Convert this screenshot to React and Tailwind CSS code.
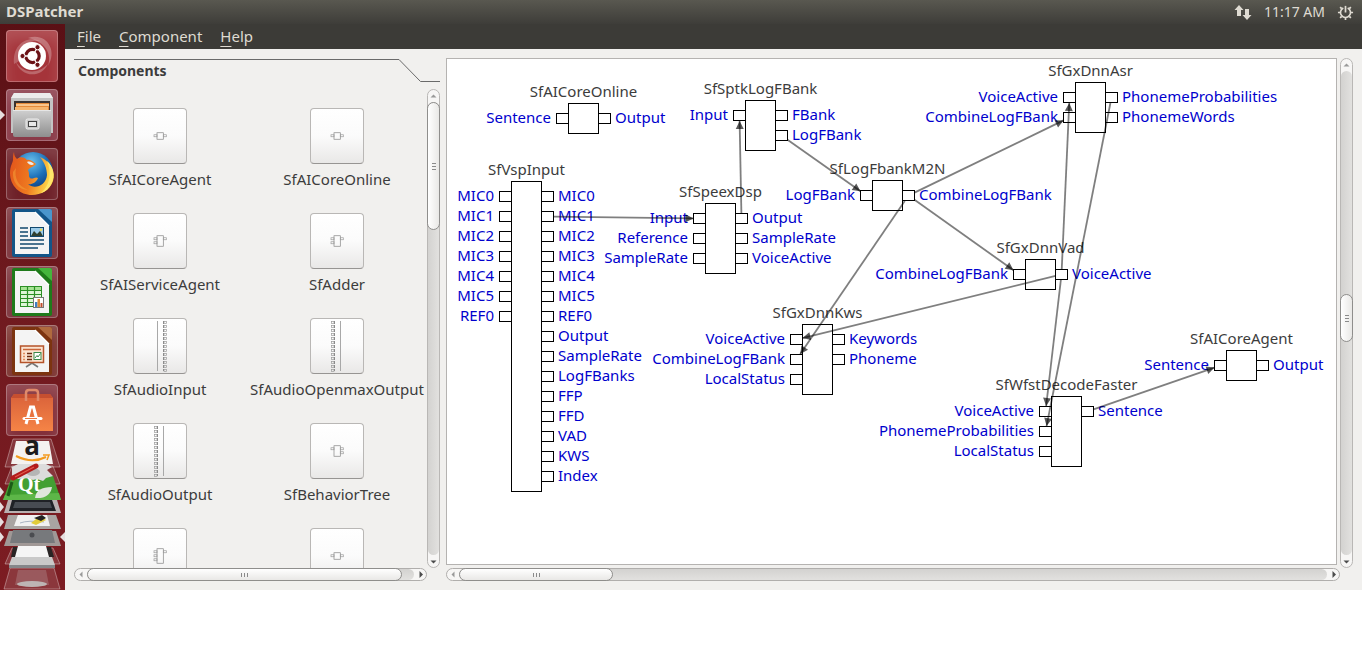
const BLACK_HALF = "rgba(0,0,0,0.5)";

const components = [
  { name: "SfAICoreAgent", ins: 1, outs: 1 },
  { name: "SfAICoreOnline", ins: 1, outs: 1 },
  { name: "SfAIServiceAgent", ins: 2, outs: 1 },
  { name: "SfAdder", ins: 2, outs: 1 },
  { name: "SfAudioInput", ins: 0, outs: 16 },
  { name: "SfAudioOpenmaxOutput", ins: 16, outs: 0 },
  { name: "SfAudioOutput", ins: 16, outs: 0 },
  { name: "SfBehaviorTree", ins: 1, outs: 2 },
  { ins: 3, outs: 1 },
  { ins: 1, outs: 1 },
];

const mics = ["MIC0", "MIC1", "MIC2", "MIC3", "MIC4", "MIC5", "REF0"];

// x, y: top-left corner of the node body on the canvas
const nodes = {
  online: { title: "SfAICoreOnline", x: 121, y: 44, ins: ["Sentence"], outs: ["Output"] },
  vsp: {
    title: "SfVspInput", x: 64, y: 122, ins: mics,
    outs: [...mics, "Output", "SampleRate", "LogFBanks", "FFP", "FFD", "VAD", "KWS", "Index"],
  },
  sptk: { title: "SfSptkLogFBank", x: 298, y: 41, ins: ["Input"], outs: ["FBank", "LogFBank"] },
  speex: {
    title: "SfSpeexDsp", x: 258, y: 144,
    ins: ["Input", "Reference", "SampleRate"], outs: ["Output", "SampleRate", "VoiceActive"],
  },
  m2n: { title: "SfLogFbankM2N", x: 425, y: 121, ins: ["LogFBank"], outs: ["CombineLogFBank"] },
  asr: {
    title: "SfGxDnnAsr", x: 628, y: 23,
    ins: ["VoiceActive", "CombineLogFBank"], outs: ["PhonemeProbabilities", "PhonemeWords"],
  },
  vad: { title: "SfGxDnnVad", x: 578, y: 200, ins: ["CombineLogFBank"], outs: ["VoiceActive"] },
  kws: {
    title: "SfGxDnnKws", x: 355, y: 265,
    ins: ["VoiceActive", "CombineLogFBank", "LocalStatus"], outs: ["Keywords", "Phoneme"],
  },
  wfst: {
    title: "SfWfstDecodeFaster", x: 604, y: 337,
    ins: ["VoiceActive", "PhonemeProbabilities", "LocalStatus"], outs: ["Sentence"],
  },
  agent: { title: "SfAICoreAgent", x: 779, y: 291, ins: ["Sentence"], outs: ["Output"] },
};

// [from node, output index, to node, input index]
const wires = [
  ["vsp", 1, "speex", 0],
  ["speex", 0, "sptk", 0],
  ["sptk", 1, "m2n", 0],
  ["m2n", 0, "asr", 1],
  ["m2n", 0, "vad", 0],
  ["m2n", 0, "kws", 1],
  ["vad", 0, "asr", 0],
  ["vad", 0, "kws", 0],
  ["vad", 0, "wfst", 0],
  ["asr", 0, "wfst", 1],
  ["wfst", 0, "agent", 0],
];

function clip(from, to) {
  const dx = to[0] - from[0];
  const dy = to[1] - from[1];
  const t = Math.min(6 / Math.abs(dx || 0.01), 5.5 / Math.abs(dy || 0.01));
  return [from[0] + dx * t, from[1] + dy * t];
}

function Wire({ wire }) {
  const [a, i, b, j] = wire;
  const from = [nodes[a].x + 36.5, nodes[a].y + 15.5 + i * 20];
  const to = [nodes[b].x - 5.5, nodes[b].y + 15.5 + j * 20];
  const s = clip(from, to);
  const e = clip(to, from);
  const len = Math.hypot(e[0] - s[0], e[1] - s[1]);
  const ux = (e[0] - s[0]) / len;
  const uy = (e[1] - s[1]) / len;
  const bx = e[0] - ux * 8;
  const by = e[1] - uy * 8;
  return (
    <g>
      <line x1={s[0]} y1={s[1]} x2={e[0]} y2={e[1]} stroke={BLACK_HALF} strokeWidth="1.8" />
      <polygon
        points={`${e[0]},${e[1]} ${bx - uy * 4},${by + ux * 4} ${bx + uy * 4},${by - ux * 4}`}
        fill="rgba(0,0,0,0.65)"
      />
    </g>
  );
}

function Port() {
  return <span className="mt-[5px] h-[11px] w-[13px] shrink-0 border border-black bg-white" />;
}

function Node({ node }) {
  const n = Math.max(node.ins.length, node.outs.length);
  return (
    <div className="absolute w-[31px] leading-[18px]" style={{ left: node.x, top: node.y - 21 }}>
      <div className="flex h-[21px] justify-center text-[#3c3c3c]">
        <span className="whitespace-nowrap">{node.title}</span>
      </div>
      <div className="relative border border-black bg-white" style={{ height: n * 20 + 11 }}>
        <ul className="absolute top-[4px] right-full flex flex-col items-end text-[#0000cd]">
          {node.ins.map((p) => (
            <li key={p} className="flex h-5 items-start gap-[5px] whitespace-nowrap">
              {p}
              <Port />
            </li>
          ))}
        </ul>
        <ul className="absolute top-[4px] left-full flex flex-col text-[#0000cd]">
          {node.outs.map((p) => (
            <li key={p} className="flex h-5 items-start gap-[4px] whitespace-nowrap">
              <Port />
              {p}
            </li>
          ))}
        </ul>
      </div>
    </div>
  );
}

function Thumb({ ins, outs }) {
  const n = Math.max(ins, outs);
  const big = n > 8;
  const h = 4 * n + 2.5;
  const top = 28 - h / 2;
  const rows = (count, start) => Array.from({ length: count }, (_, i) => start + i * 4);
  return (
    <svg viewBox="1 1 52 54" className="h-full w-full" fill="none" stroke="#9c9c9c" strokeWidth="0.7">
      {big ? (
        <g>
          <path d={ins ? "M30.500 3V53" : "M24.500 3V53"} stroke="#a8a8a8" strokeWidth="1" />
          <path d={ins ? "M24.500 3V53" : "M30.500 3V53"} stroke="#858585" strokeWidth="1" strokeDasharray="3 1" />
          {rows(13, 3.5).map((y) => (
            <rect key={y} x={ins ? 21.5 : 31} y={y} width="2.5" height="2" />
          ))}
        </g>
      ) : (
        <g>
          <rect x="24" y={top} width="6.300" height={h} stroke="#858585" />
          {rows(ins, top + 2).map((y) => (
            <rect key={y} x="21" y={y} width="3" height="2" />
          ))}
          {rows(outs, top + 2).map((y) => (
            <rect key={y} x="30.300" y={y} width="3" height="2" />
          ))}
        </g>
      )}
    </svg>
  );
}

const ARROWS = {
  up: "M2.5 6.5L5.5 3.5L8.5 6.5Z",
  down: "M2.5 4.5L5.5 7.5L8.5 4.5Z",
  left: "M6.5 2.5L3.5 5.5L6.5 8.5Z",
  right: "M4.5 2L8 5.5L4.5 9Z",
};

function ArrowButton({ dir, dim }) {
  return (
    <button type="button" aria-label={`Scroll ${dir}`} className="flex size-[12px] shrink-0 items-center justify-center">
      <svg viewBox="0 0 11 11" className="size-[11px] shrink-0">
        <path d={ARROWS[dir]} fill={dim ? "#9a9a9a" : "#4c4c4c"} />
      </svg>
    </button>
  );
}

function VScroll({ before, size, topDim }) {
  return (
    <div className="flex w-[13px] shrink-0 flex-col items-center rounded-full border border-[#b9b7b5] bg-[#f7f6f5]">
      <ArrowButton dir="up" dim={topDim} />
      <div className="flex w-full grow flex-col rounded-full bg-linear-to-r from-[#d3d2d0] to-[#e2e1df]">
        <div className={before} />
        <div className={`-mx-px flex flex-col items-center justify-center gap-[2px] rounded-full border border-[#8f8e8c] bg-linear-to-r from-white to-[#e9e8e6] ${size}`}>
          <i className="h-px w-[4px] bg-[#8a8a8a]" />
          <i className="h-px w-[4px] bg-[#8a8a8a]" />
          <i className="h-px w-[4px] bg-[#8a8a8a]" />
        </div>
      </div>
      <ArrowButton dir="down" />
    </div>
  );
}

function HScroll({ size }) {
  return (
    <div className="flex h-[13px] shrink-0 items-center rounded-full border border-[#b0aeac] bg-[#f7f6f5]">
      <ArrowButton dir="left" dim />
      <div className="flex h-full grow rounded-full bg-linear-to-b from-[#d3d2d0] to-[#e2e1df]">
        <div className={`-my-px flex items-center justify-center gap-[2px] rounded-full border border-[#8f8e8c] bg-linear-to-b from-white to-[#e9e8e6] ${size}`}>
          <i className="h-[4px] w-px bg-[#8a8a8a]" />
          <i className="h-[4px] w-px bg-[#8a8a8a]" />
          <i className="h-[4px] w-px bg-[#8a8a8a]" />
        </div>
      </div>
      <ArrowButton dir="right" />
    </div>
  );
}

function UbuntuIcon() {
  return (
    <svg viewBox="0 0 52 52" className="size-full">
      <path d="M8 34C6 14 22 4 36 12C28 8 14 14 15 30" fill="rgba(255,255,255,.22)" />
      <path d="M22 8C40 2 52 20 42 36C46 24 40 12 22 8" fill="rgba(255,255,255,.28)" />
      <path d="M42 34C34 50 14 46 10 32C16 42 30 46 42 34" fill="rgba(255,255,255,.25)" />
      <circle cx="26" cy="26" r="14" fill="#fff" />
      <circle cx="26.500" cy="26" r="6.700" fill="none" stroke="#6b1216" strokeWidth="3.200" />
      <path d="M26.500 26L32.500 36.400M26.500 26L32.500 15.600M26.500 26H16" stroke="#fff" strokeWidth="1.300" />
      <g fill="#6b1216" stroke="#fff" strokeWidth="1">
        <circle cx="16.500" cy="26" r="2.600" />
        <circle cx="31.500" cy="17.200" r="2.600" />
        <circle cx="31.500" cy="34.800" r="2.600" />
      </g>
    </svg>
  );
}

function FilesIcon() {
  return (
    <svg viewBox="0 0 52 52" className="size-full">
      <defs>
        <linearGradient id="cab" x2="0" y2="1">
          <stop offset="0" stopColor="#d0d0d0" />
          <stop offset="1" stopColor="#8e8e8e" />
        </linearGradient>
      </defs>
      <path d="M5 9L8 4H44L47 9V44H5Z" fill="#c4c4c4" />
      <path d="M5 9L8 4H44L47 9Z" fill="#ececec" />
      <rect x="8" y="12" width="36" height="12" fill="#3a3230" />
      <rect x="10" y="14" width="33" height="10" fill="#e58a3a" />
      <path d="M10 16H43" stroke="#ffd9a8" strokeWidth="1.500" />
      <rect x="9" y="18" width="33" height="6" fill="#f6b56e" />
      <path d="M7 21H45V46Q45 48 43 48H9Q7 48 7 46Z" fill="url(#cab)" />
      <path d="M7 21.500H45" stroke="#e6e6e6" />
      <rect x="20" y="30" width="13" height="10" rx="1.500" fill="#c9c9c9" stroke="#efefef" />
      <rect x="22.500" y="32.500" width="8" height="5" fill="#e9e9e9" stroke="#444" />
    </svg>
  );
}

function FirefoxIcon() {
  return (
    <svg viewBox="0 0 52 52" className="size-full">
      <defs>
        <radialGradient id="globe" cx=".45" cy=".25" r=".8">
          <stop offset="0" stopColor="#6cc3ee" />
          <stop offset=".5" stopColor="#1c6fb8" />
          <stop offset="1" stopColor="#0b2f6b" />
        </radialGradient>
        <linearGradient id="fox" x1="0" y1="0" x2="1" y2=".2">
          <stop offset="0" stopColor="#e2521b" />
          <stop offset=".55" stopColor="#ee7a20" />
          <stop offset="1" stopColor="#ffd94a" />
        </linearGradient>
      </defs>
      <circle cx="27" cy="24" r="20" fill="url(#globe)" />
      <path
        d="M8 4C8 8 10 10 11 11C14 8 19 9 21 12C25 11 27 14 30 16C28 19 24 19 22 22C24 26 22 28 24 30C27 32 29 28 32 30C30 35 25 37 22 36C28 42 40 38 41 27C41 20 38 14 34 9C45 14 50 24 47 33C44 42 35 47 26 47C14 47 4 38 4 25C4 18 7 14 7 12C7 9 7 6 8 4Z"
        fill="url(#fox)"
      />
      <path d="M41 13C47 18 50 28 45 36C44 40 39 44 35 45C44 38 46 24 41 13Z" fill="#ffe66b" />
      <path d="M21 14C24 13 26 14 28 16C26 18 23 17 21 14Z" fill="#e9eef2" />
      <path d="M10 20C8 30 12 38 22 42C12 42 6 33 7 24Z" fill="#f5a63a" opacity=".5" />
    </svg>
  );
}

function DocFrame({ color, light, children }) {
  return (
    <svg viewBox="0 0 52 52" className="size-full">
      <path d="M8 2H44Q46 2 46 4V48Q46 50 44 50H8Q6 50 6 48V4Q6 2 8 2Z" fill={color} />
      <path d="M32 2H44Q46 2 46 4V15Z" fill={light} />
      <path d="M9 5H29L43 19V47H9Z" fill="#f4f4f4" />
      <path d="M29 5L43 19" stroke="#fff" strokeWidth="1.200" />
      {children}
    </svg>
  );
}

function WriterIcon() {
  return (
    <DocFrame color="#135588" light="#4a96cc">
      <path d="M14 21H22M14 25H22M14 29H22M14 33H38M14 37H38M14 41H32" stroke="#12486e" strokeWidth="1.700" />
      <rect x="24.500" y="20.500" width="13" height="9" fill="#9ccbe8" stroke="#12486e" />
      <path d="M25 29L28 24L31 27L34 24L37 29Z" fill="#2f4030" />
      <circle cx="35" cy="22.800" r="1.200" fill="#f4dc52" />
    </DocFrame>
  );
}

function CalcIcon() {
  return (
    <DocFrame color="#1f7a1a" light="#45b53c">
      <rect x="14.500" y="20.500" width="21" height="20" fill="#dff5d8" stroke="#2c8f25" />
      <rect x="15" y="21" width="20" height="4" fill="#a6e394" />
      <path d="M14 24.500H36M14 28.500H36M14 32.500H36M14 36.500H36M21.500 20V41M28.500 20V41" stroke="#2c8f25" strokeWidth="1.200" />
      <rect x="27.500" y="31.500" width="10" height="10" fill="#fff" stroke="#777" />
      <path d="M29 36H31.500V41H29Z" fill="#3f7fc0" />
      <path d="M31.500 33H34V41H31.500Z" fill="#e08a35" />
      <path d="M34.500 37H36.500V41H34.500Z" fill="#c04d2c" />
    </DocFrame>
  );
}

function ImpressIcon() {
  return (
    <DocFrame color="#7c3410" light="#b06a3e">
      <path d="M26 38L20 42M26 38L32 42" stroke="#777" strokeWidth="1.600" />
      <rect x="14.500" y="21" width="23" height="16.500" fill="#fbe3d0" stroke="#b5532a" strokeWidth="1.500" />
      <path d="M17 24.500H35" stroke="#c9653a" strokeWidth="1.500" />
      <path d="M17 28.500H19M17 31.500H19M17 34.500H19" stroke="#e08c5c" strokeWidth="1.700" />
      <path d="M21 28.500H26M21 31.500H26M21 34.500H26" stroke="#6d2c10" strokeWidth="1.500" />
      <rect x="28" y="27.500" width="7" height="7" fill="#fff" stroke="#3d8a4b" />
      <path d="M29 33L31 30.500L32 32L34.500 28.500" fill="none" stroke="#3d8a4b" />
    </DocFrame>
  );
}

function SoftwareIcon() {
  return (
    <svg viewBox="0 0 52 52" className="size-full">
      <defs>
        <linearGradient id="bag" x2="0" y2="1">
          <stop offset="0" stopColor="#d9613a" />
          <stop offset="1" stopColor="#f58446" />
        </linearGradient>
      </defs>
      <path d="M5 14L8 10H44L47 14V47H5Z" fill="url(#bag)" />
      <path d="M5 14L8 10H44L47 14Z" fill="#c64f30" />
      <path d="M20 17V9Q20 6 23 6H29Q32 6 32 9V17" fill="none" stroke="#e08a6a" strokeWidth="2.500" />
      <path d="M20 40L24.500 23H27.500L32 40" fill="none" stroke="#fff" strokeWidth="3" />
      <path d="M18 34.500H35" stroke="#fff" strokeWidth="3" strokeLinecap="round" />
      <path d="M19 34.500H31" stroke="#ee7a42" strokeWidth="1" />
    </svg>
  );
}

function StackIcon() {
  return (
    <svg viewBox="0 0 65 152" className="h-[152px] w-[65px] overflow-visible">
      <g stroke="rgba(255,255,255,.35)" fill="rgba(255,255,255,.12)">
        <path d="M13 1H51L60 29H5Z" />
        <path d="M12 28H53L60 46H5Z" />
        <path d="M12 110H53L60 126H5Z" />
        <path d="M10 130H54L60 151H4Z" />
      </g>
      <path d="M16 3H49L53 26H11Z" fill="#f4f2f0" />
      <text x="32" y="17" textAnchor="middle" fontSize="26" fontWeight="700" fontFamily="Open Sans, sans-serif" fill="#1c1c1c">a</text>
      <path d="M16 18Q32 26 46 19" fill="none" stroke="#f39a1e" strokeWidth="2" />
      <path d="M43 17L49 17L47 22" fill="none" stroke="#f39a1e" strokeWidth="1.500" />
      <path d="M12 38H53L61 62H3Z" fill="#43a033" />
      <path d="M3 62L5 57L59 55L61 62Z" fill="#5db648" />
      <text x="29" y="53" textAnchor="middle" fontSize="20" fontFamily="Liberation Serif, serif" fontWeight="700" fill="#fff">Qt</text>
      <path d="M12 29L18 26H46L52 29L47 32L53 38L46 40L43 43L37 41L33 42L28 40L18 41L12 38Z" fill="#dcdcdc" />
      <ellipse cx="33" cy="34" rx="7" ry="4" fill="#b5b5b5" />
      <path d="M13 40L36 28" stroke="#b21c1c" strokeWidth="5" strokeLinecap="round" />
      <path d="M15 39L34 29" stroke="#e3584c" strokeWidth="1.200" />
      <path d="M12 44L8 58" stroke="#1b5c17" strokeWidth="3" />
      <path d="M35 60Q36 49 52 49Q50 61 35 60Z" fill="#dfe6dc" />
      <path d="M8 62H57L61 75H4Z" fill="#b9b1b1" />
      <path d="M12 62H52L56 73H9Z" fill="#1f2226" />
      <path d="M15 64H50L52 70H13Z" fill="#474c52" />
      <path d="M8 77H56L61 91H4Z" fill="#a9a4a2" />
      <path d="M18 77H47L50 88H14Z" fill="#f1f1f1" />
      <path d="M20 85Q28 82 44 84" fill="none" stroke="#aab4c2" />
      <path d="M31 85L40 78L46 82L36 87Z" fill="#e2cc3b" />
      <path d="M34 80L42 77L46 80L41 83Z" fill="#222" />
      <path d="M9 93H56L61 108H4Z" fill="#a09896" />
      <path d="M13 92H52L55 105H10Z" fill="#77797c" />
      <circle cx="32" cy="97" r="2.500" fill="#4a4c50" />
      <path d="M13 109H51L54 119H11Z" fill="#292424" />
      <path d="M18 108H46L49 119H15Z" fill="#f5f5f5" />
      <path d="M12 119H52L55 127H9Z" fill="#c9c9c9" />
      <path d="M9 127H55V130H9Z" fill="#85878a" />
      <path d="M18 132H46L49 147H15Z" fill="rgba(200,190,190,.25)" />
      <ellipse cx="32" cy="146" rx="15" ry="3" fill="#bdb5b4" />
      <g fill="#e6dede">
        <path d="M0 49L4 54L0 59Z" />
        <path d="M0 64L4 69L0 74Z" />
        <path d="M0 79L4 84L0 89Z" />
        <path d="M0 94L4 99L0 104Z" />
        <path d="M65 94L60 99L65 104Z" />
      </g>
    </svg>
  );
}

const apps = [
  { name: "Search", Icon: UbuntuIcon, tint: "bg-[#a5343a]" },
  { name: "Files", Icon: FilesIcon, tint: "bg-[#8a3a48]", running: true },
  { name: "Firefox", Icon: FirefoxIcon, tint: "bg-[#6e2028]" },
  { name: "Writer", Icon: WriterIcon, tint: "bg-[#7c343c]" },
  { name: "Calc", Icon: CalcIcon, tint: "bg-[#7c343c]" },
  { name: "Impress", Icon: ImpressIcon, tint: "bg-[#7c3430]" },
  { name: "Software", Icon: SoftwareIcon, tint: "bg-[#83303a]" },
];

function Launcher() {
  return (
    <nav aria-label="Launcher" className="flex w-[65px] shrink-0 flex-col bg-linear-to-b from-[#5a1015] via-[#701a1f] to-[#7c1c22] pt-[6px]">
      <ul className="flex flex-col gap-[7px]">
        {apps.map(({ name, Icon, tint, running }) => (
          <li key={name} className="flex items-center">
            <span className="flex w-[6px]">
              {running && (
                <svg viewBox="0 0 5 10" className="h-[10px] w-[5px]">
                  <path d="M0 0L5 5L0 10Z" fill="#e6dede" />
                </svg>
              )}
            </span>
            <button
              type="button"
              aria-label={name}
              className={`size-[52px] rounded-[4px] shadow-[inset_0_0_0_1px_rgba(255,255,255,0.25),inset_0_10px_14px_rgba(255,255,255,0.15)] ${tint}`}
            >
              <Icon />
            </button>
          </li>
        ))}
      </ul>
      <button type="button" aria-label="More applications" className="mt-[2px]">
        <StackIcon />
      </button>
    </nav>
  );
}

function TopBar() {
  return (
    <header className="flex h-6 items-center bg-linear-to-b from-[#595850] to-[#3e3d39] pr-2 pl-[6px] text-[#dfdbd2]">
      <h1 className="grow self-start leading-[22px] font-bold">DSPatcher</h1>
      <button type="button" aria-label="Network" className="mr-[12px]">
        <svg viewBox="0 0 18 17" className="h-[17px] w-[18px]" fill="#dfdbd2">
          <path d="M5 1L9.500 6H7V12H3V6H.5Z" />
          <path d="M13 16L8.500 11H11V5H15V11H17.500Z" />
        </svg>
      </button>
      <time className="mr-[12px] text-[14px]">11:17 AM</time>
      <button type="button" aria-label="Session">
        <svg viewBox="0 0 18 18" className="size-[17px]" fill="none" stroke="#dfdbd2">
          <path d="M6.700 4.200A5.300 5.300 0 1 0 11.300 4.200" strokeWidth="1.700" />
          <path d="M9 2V9" strokeWidth="1.800" />
          <path d="M1 9H3.500M14.500 9H17M9 14.500V17M3.300 3.300L5 5M14.700 3.300L13 5M3.300 14.700L5 13M14.700 14.700L13 13" strokeWidth="1.800" />
        </svg>
      </button>
    </header>
  );
}

function MenuBar() {
  return (
    <nav aria-label="Menu" className="flex h-[25px] items-center gap-[18px] bg-[#3c3b37] px-3 pb-[2px] text-[#dfdbd2]">
      {["File", "Component", "Help"].map((item) => (
        <button key={item} type="button">
          <span className="underline underline-offset-[4px]">{item[0]}</span>
          {item.slice(1)}
        </button>
      ))}
    </nav>
  );
}

function ComponentsPanel() {
  return (
    <section aria-labelledby="components-title" className="flex w-[366px] shrink-0 flex-col">
      <div className="flex h-[31px]">
        <h2 id="components-title" className="mt-px grow border-t border-[#6a6a6a] pl-[4px] text-[14px] leading-[22px] font-bold text-[#3c3c3c]">
          Components
        </h2>
        <svg viewBox="0 0 41 31" className="h-[31px] w-[41px]">
          <path d="M0 1.500L21.500 23.500H41" fill="none" stroke="#6a6a6a" />
        </svg>
      </div>
      <div className="flex h-0 grow">
        <ul className="grid grow grid-cols-2 content-start gap-x-[5px] gap-y-[25px] overflow-hidden pt-[19px] pr-1">
          {components.map((c, i) => (
            <li key={i} className="flex flex-col items-center gap-[6px]">
              <button
                type="button"
                aria-label={c.name ?? "Component"}
                className="h-14 w-[54px] rounded-[4px] border border-[#b9b7b5] border-b-[#979593] bg-linear-to-b from-white via-[#fbfbfb] to-[#e9e8e7]"
              >
                <Thumb ins={c.ins} outs={c.outs} />
              </button>
              {c.name && <span className="leading-[18px] whitespace-nowrap">{c.name}</span>}
            </li>
          ))}
        </ul>
        <VScroll before="hidden" size="h-[128px]" topDim />
      </div>
      <div className="pr-[13px]">
        <HScroll size="w-[315px]" />
      </div>
    </section>
  );
}

function Canvas() {
  return (
    <section aria-label="Circuit" className="flex min-w-0 grow flex-col">
      <div className="flex gap-[3px]">
        <div className="relative h-[507px] min-w-0 grow overflow-hidden border border-[#b5b3b1] bg-white">
          {Object.values(nodes).map((node) => (
            <Node key={node.title} node={node} />
          ))}
          <svg className="pointer-events-none absolute inset-0 size-full">
            {wires.map((w) => (
              <Wire key={w.join()} wire={w} />
            ))}
          </svg>
        </div>
        <div className="-mb-[3px] flex">
          <VScroll before="h-[223px]" size="h-[48px]" topDim />
        </div>
      </div>
      <div className="mt-[3px] pr-[13px]">
        <HScroll size="w-[154px]" />
      </div>
    </section>
  );
}

export default function App() {
  return (
    <div className="min-h-screen bg-white font-['Noto_Sans','Open_Sans',sans-serif] text-[15px] leading-5 text-[#3c3c3c]">
      <TopBar />
      <div className="flex">
        <Launcher />
        <main className="flex min-w-0 grow flex-col bg-[#f1f0ee]">
          <MenuBar />
          <div className="flex grow gap-[6px] p-[9px]">
            <ComponentsPanel />
            <Canvas />
          </div>
        </main>
      </div>
    </div>
  );
}
